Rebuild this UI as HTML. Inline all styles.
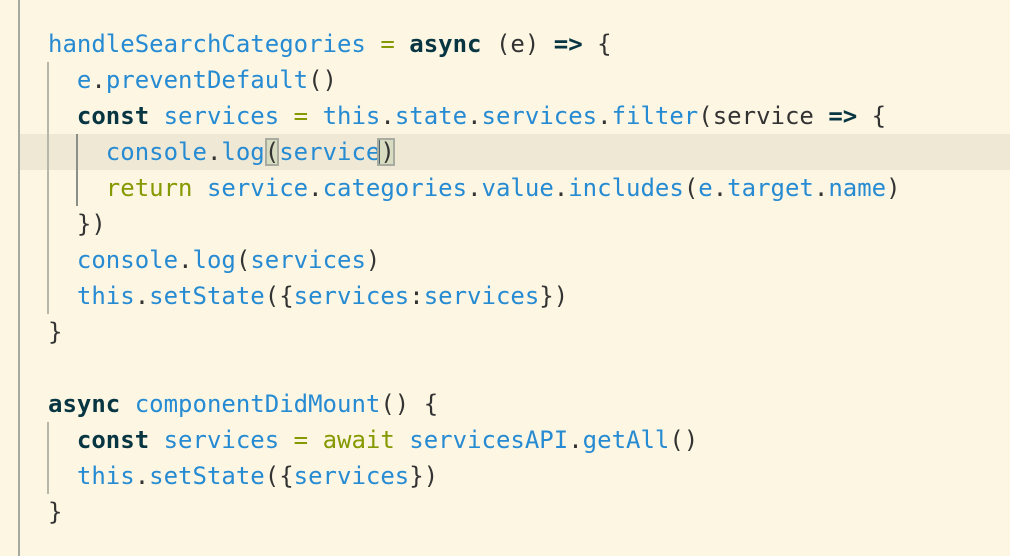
<!DOCTYPE html>
<html><head><style>
body{margin:0;width:1010px;height:556px;background:#fdf6e3;overflow:hidden;position:relative;font-family:"DejaVu Sans Mono","Liberation Mono",monospace;font-size:24px;color:#333}
.l{position:absolute;left:48px;height:36px;line-height:36px;white-space:pre}
.b{color:#268bd2}.k{color:#073642;font-weight:bold}.g{color:#859900}
.hl{position:absolute;left:20px;right:0;top:134px;height:36px;background:#eee8d5}
.v{position:absolute;width:2px;background:#b7b7a8}
.bx{background:#d8dcc0;outline:2px solid #a8aca0;outline-offset:-2px}
.cur{border-left:3px solid #4a6470;margin-left:-3px}
</style></head><body>
<div class="hl"></div>
<div class="v" style="left:18px;top:0;height:556px;background:#a4aaa0"></div>
<div class="v" style="left:47px;top:62px;height:252px"></div>
<div class="v" style="left:76px;top:134px;height:72px;background:#8a9088"></div>
<div class="v" style="left:47px;top:422px;height:72px"></div>
<div class="l" style="top:26px"><span class="b">handleSearchCategories</span> <span class="g">=</span> <span class="k">async</span> (e) <span class="k">=&gt;</span> {</div>
<div class="l" style="top:62px">  <span class="b">e</span>.<span class="b">preventDefault</span>()</div>
<div class="l" style="top:98px">  <span class="k">const</span> <span class="b">services</span> <span class="g">=</span> <span class="b">this</span>.<span class="b">state</span>.<span class="b">services</span>.<span class="b">filter</span>(service <span class="k">=&gt;</span> {</div>
<div class="l" style="top:134px">    <span class="b">console</span>.<span class="b">log</span><span class="bx">(</span><span class="b">service</span><span class="bx cur">)</span></div>
<div class="l" style="top:170px">    <span class="g">return</span> <span class="b">service</span>.<span class="b">categories</span>.<span class="b">value</span>.<span class="b">includes</span>(<span class="b">e</span>.<span class="b">target</span>.<span class="b">name</span>)</div>
<div class="l" style="top:206px">  })</div>
<div class="l" style="top:242px">  <span class="b">console</span>.<span class="b">log</span>(<span class="b">services</span>)</div>
<div class="l" style="top:278px">  <span class="b">this</span>.<span class="b">setState</span>({<span class="b">services</span>:<span class="b">services</span>})</div>
<div class="l" style="top:314px">}</div>
<div class="l" style="top:386px"><span class="k">async</span> <span class="b">componentDidMount</span>() {</div>
<div class="l" style="top:422px">  <span class="k">const</span> <span class="b">services</span> <span class="g">=</span> <span class="g">await</span> <span class="b">servicesAPI</span>.<span class="b">getAll</span>()</div>
<div class="l" style="top:458px">  <span class="b">this</span>.<span class="b">setState</span>({<span class="b">services</span>})</div>
<div class="l" style="top:494px">}</div>
</body></html>
